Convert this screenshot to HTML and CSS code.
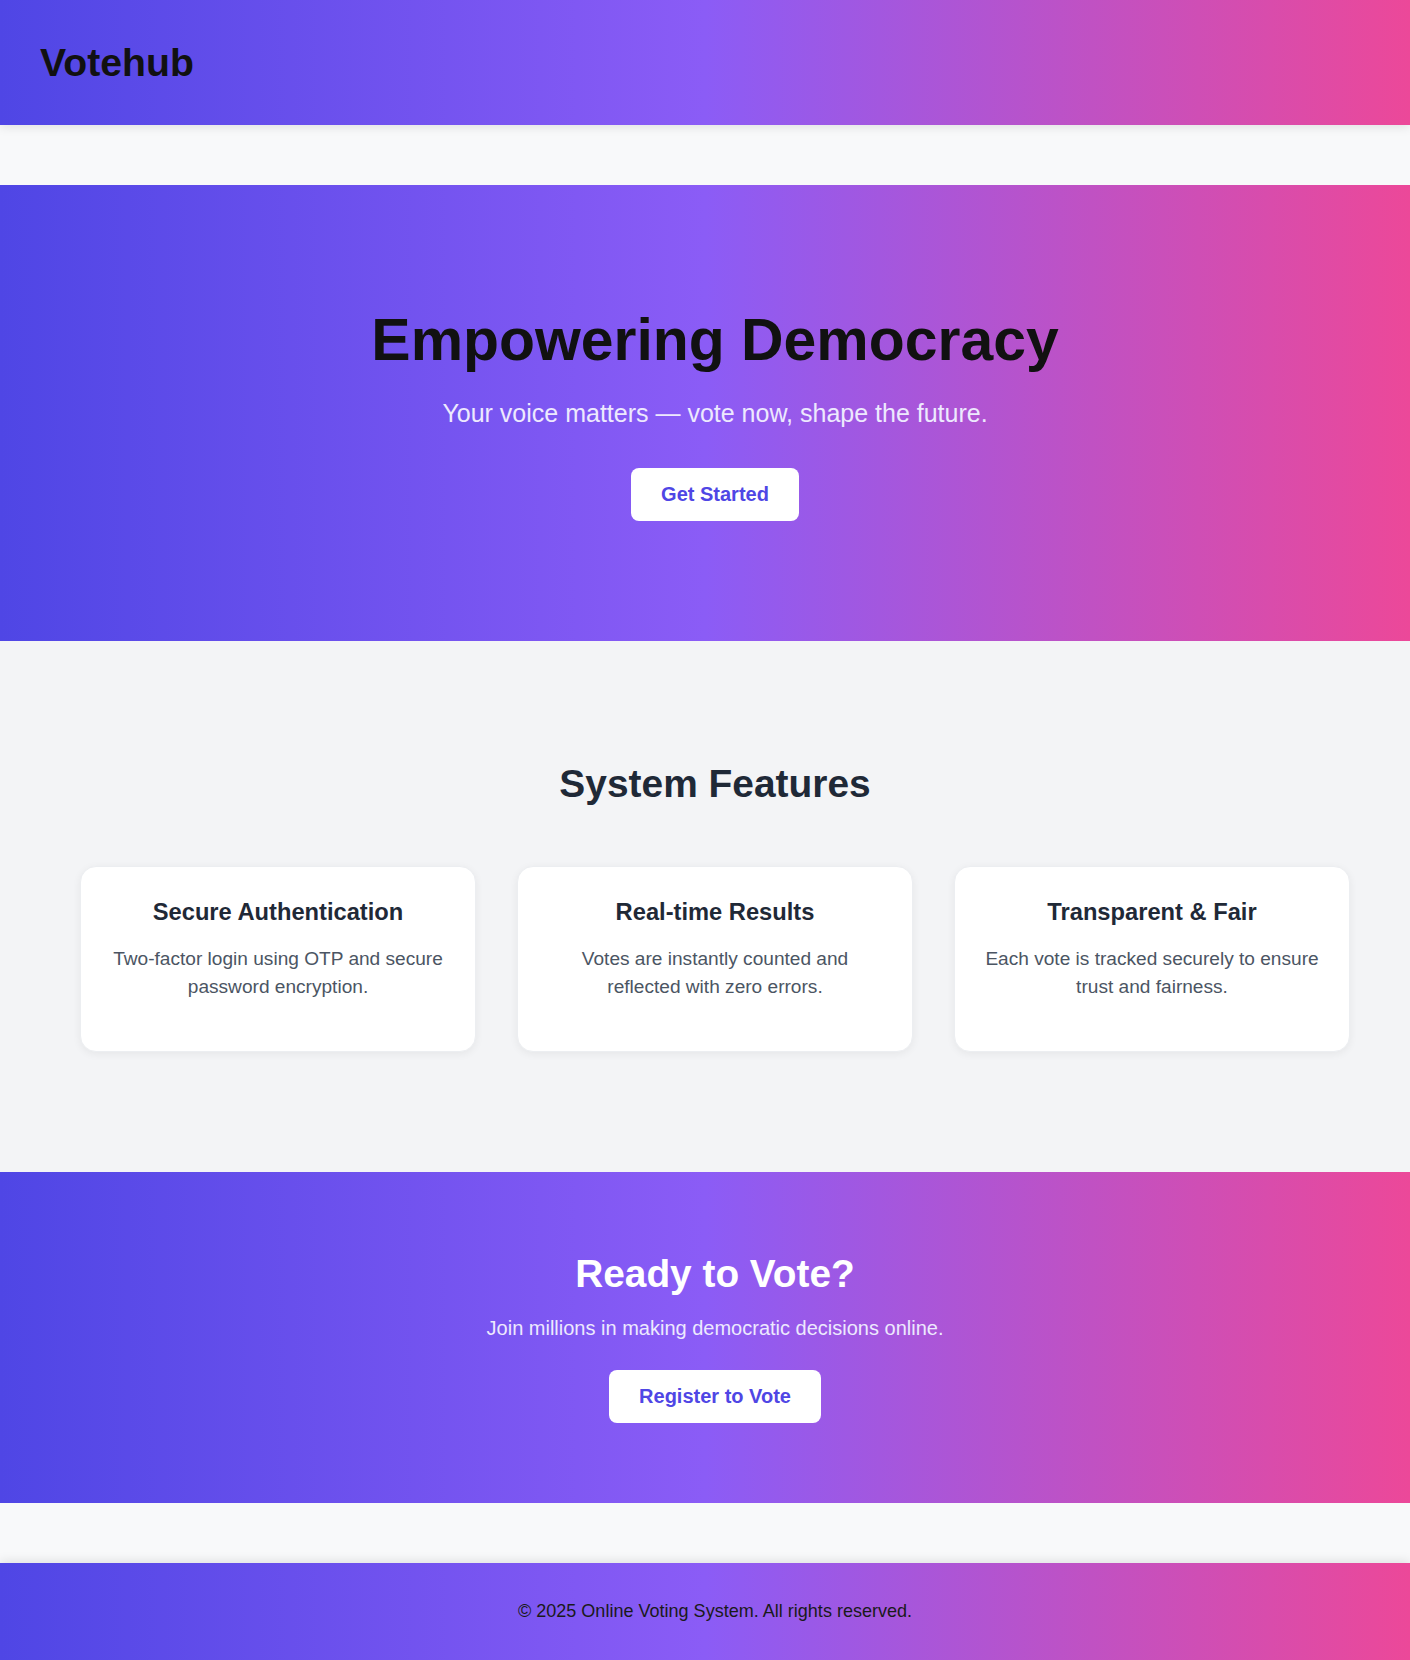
FILE: index.html
```html
<!DOCTYPE html>
<html lang="en">
<head>
<meta charset="UTF-8">
<title>Votehub</title>
<link rel="stylesheet" href="styles.css">
</head>
<body>
<header class="site-header">
  <div class="logo">Votehub</div>
</header>
<main class="main">
  <section class="hero">
    <h1 class="hero-title">Empowering Democracy</h1>
    <p class="hero-sub">Your voice matters — vote now, shape the future.</p>
    <a class="btn" href="#">Get Started</a>
  </section>
  <section class="features">
    <h2 class="section-title">System Features</h2>
    <div class="feature-grid">
      <div class="card">
        <h3 class="card-title">Secure Authentication</h3>
        <p class="card-text">Two-factor login using OTP and secure password encryption.</p>
      </div>
      <div class="card">
        <h3 class="card-title">Real-time Results</h3>
        <p class="card-text">Votes are instantly counted and reflected with zero errors.</p>
      </div>
      <div class="card">
        <h3 class="card-title">Transparent &amp; Fair</h3>
        <p class="card-text">Each vote is tracked securely to ensure trust and fairness.</p>
      </div>
    </div>
  </section>
  <section class="cta">
    <h2 class="cta-title">Ready to Vote?</h2>
    <p class="cta-sub">Join millions in making democratic decisions online.</p>
    <a class="btn" href="#">Register to Vote</a>
  </section>
</main>
<footer class="site-footer">
  <p class="footer-text">© 2025 Online Voting System. All rights reserved.</p>
</footer>
</body>
</html>
```
FILE: styles.css
```css
* { box-sizing: border-box; }

html, body {
  margin: 0;
  padding: 0;
}

body {
  font-family: "Liberation Sans", Arial, sans-serif;
  background: #f8f9fa;
  color: #1a1a1a;
}

.site-header,
.hero,
.cta,
.site-footer {
  background: linear-gradient(90deg, #4f46e5 0%, #8b5cf6 50%, #ec4899 100%);
}

.site-header {
  height: 125px;
  display: flex;
  align-items: center;
  padding: 0 40px;
  box-shadow: 0 2px 10px rgba(0, 0, 0, 0.1);
  position: relative;
  z-index: 1;
}

.logo {
  font-size: 39.2px;
  font-weight: 700;
  color: #111;
  line-height: 1.2;
}

.main {
  padding: 60px 0;
}

.hero {
  padding: 120px 0 120px 20px;
  text-align: center;
}

.hero-title {
  margin: 0;
  font-size: 58.9px;
  line-height: 1.2;
  font-weight: 700;
  color: #111;
}

.hero-sub {
  margin: 19px 0 36px;
  font-size: 25px;
  line-height: 1.48;
  color: #ede9fe;
}

.btn {
  display: inline-block;
  background: #fff;
  color: #4f46e5;
  font-weight: 700;
  font-size: 20px;
  line-height: 23px;
  padding: 15px 30px;
  border-radius: 8px;
  text-decoration: none;
}

.features {
  background: #f3f4f6;
  padding: 120px 60px 120px 80px;
  text-align: center;
}

.section-title {
  margin: 0 0 59px;
  font-size: 38.9px;
  line-height: 1.2;
  font-weight: 700;
  color: #1f2937;
}

.feature-grid {
  display: grid;
  grid-template-columns: repeat(3, 1fr);
  gap: 41px;
}

.card {
  background: #fff;
  border-radius: 16px;
  padding: 32px 30px;
  box-shadow: 0 2px 8px rgba(0, 0, 0, 0.06);
  border: 1px solid #eceef1;
}

.card-title {
  margin: 0;
  font-size: 23.7px;
  line-height: 1.15;
  font-weight: 700;
  color: #1f2937;
}

.card-text {
  margin: 18px 0 17px;
  font-size: 19.1px;
  line-height: 28.6px;
  color: #4b5563;
}

.cta {
  padding: 79px 0 80px 20px;
  text-align: center;
}

.cta-title {
  margin: 0;
  font-size: 38.8px;
  line-height: 1.2;
  font-weight: 700;
  color: #fff;
}

.cta-sub {
  margin: 16px 0 27px;
  font-size: 20px;
  line-height: 1.5;
  color: #ede9fe;
}

.site-footer {
  padding: 35px 0 35px 20px;
  text-align: center;
  box-shadow: 0 -2px 10px rgba(0, 0, 0, 0.1);
}

.footer-text {
  margin: 0;
  font-size: 18.05px;
  line-height: 27px;
  color: #1a1a1a;
}
```
